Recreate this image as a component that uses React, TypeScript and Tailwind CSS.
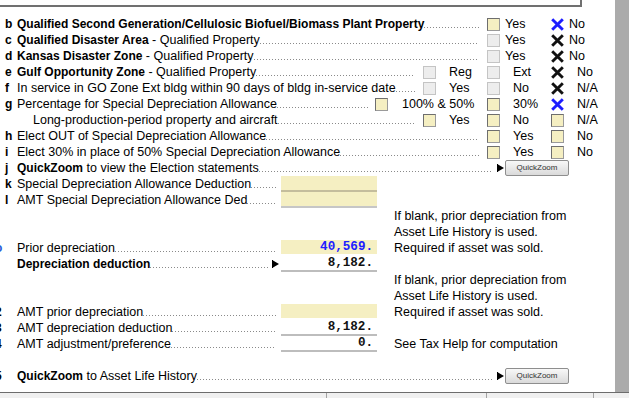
import React from "react";

const mono = "font-['Liberation_Mono','Courier_New',monospace]";

type Mark = "y" | "g" | "xk" | "xb";

function Check({ m }: { m: Mark }) {
  if (m === "xk" || m === "xb") {
    const c = m === "xb" ? "#1c1cff" : "#111111";
    return (
      <svg width="13" height="13" viewBox="0 0 13 13" className="shrink-0">
        <path d="M1.2 1.2 L11.8 11.8 M11.8 1.2 L1.2 11.8" stroke={c} strokeWidth="2.9" />
      </svg>
    );
  }
  return (
    <span
      className={
        m === "y"
          ? "block w-[13px] h-[13px] shrink-0 border border-[#9a9a9a] border-t-[#6e6e6e] border-l-[#6e6e6e] bg-[#f5efc2]"
          : "block w-[13px] h-[13px] shrink-0 border border-[#c4c4c4] bg-[#ededed]"
      }
    />
  );
}

function Leader() {
  return (
    <span className="flex-1 min-w-0 h-px self-end mb-[4px] bg-[linear-gradient(to_right,#8a8a8a_1px,transparent_1px)] bg-[length:3px_1px]" />
  );
}

function Arrow() {
  return (
    <svg width="7" height="8" viewBox="0 0 7 8" className="shrink-0">
      <rect x="0" y="0" width="1" height="8" fill="#000" />
      <path d="M1 0.5 L7 4 L1 7.5 Z" fill="#000" />
    </svg>
  );
}

function ZoomButton() {
  return (
    <button className="w-[64px] h-[16px] shrink-0 rounded-[2px] border border-[#8e8e8e] bg-[linear-gradient(#f8f8f8,#dadada)] text-[8px] leading-[14px] text-[#333]">
      QuickZoom
    </button>
  );
}

function Row({
  letter,
  cut,
  cutBlue,
  pr = "pr-[8px]",
  children,
  trail,
}: {
  letter?: string;
  cut?: string;
  cutBlue?: boolean;
  pr?: string;
  children?: React.ReactNode;
  trail?: React.ReactNode;
}) {
  return (
    <div className="flex h-4 items-center">
      <div className="w-[17px] shrink-0 overflow-hidden text-[12px] font-bold">
        {letter && <span className="pl-[5px]">{letter}</span>}
        {cut && <span className={cutBlue ? "block -ml-[5px] text-[#2a5bd7]" : "block -ml-[5px]"}>{cut}</span>}
      </div>
      <div className={`flex flex-1 min-w-0 items-center ${pr}`}>
        <span className="whitespace-nowrap">{children}</span>
        <Leader />
      </div>
      {trail && <div className="flex shrink-0 items-center">{trail}</div>}
    </div>
  );
}

function B({ children }: { children: React.ReactNode }) {
  return <b className="text-[12px] font-bold">{children}</b>;
}

function Opt({ m, label, cls }: { m: Mark; label: string; cls: string }) {
  return (
    <>
      <Check m={m} />
      <span className={cls}>{label}</span>
    </>
  );
}

function Field({ value, bg, line, blue }: { value?: string; bg?: string; line?: string; blue?: boolean }) {
  return (
    <div className="w-[96px] h-[16px] shrink-0 flex flex-col">
      <div
        className={`h-[14px] pr-[4px] text-right text-[12.6px] leading-[14px] font-bold ${mono} ${bg ?? ""} ${
          blue ? "text-[#2020ff]" : "text-[#111]"
        }`}
      >
        {value}
      </div>
      <div className={`h-[2px] ${line ?? ""}`} />
    </div>
  );
}

function Note({ children }: { children?: React.ReactNode }) {
  return <span className="w-[238px] shrink-0 pl-[17px] whitespace-nowrap">{children}</span>;
}

function NoteRow({ children }: { children: React.ReactNode }) {
  return <div className="h-4 pl-[394px] whitespace-nowrap">{children}</div>;
}

export default function App() {
  const yes2 = "w-[51px] pl-[5px]";
  const col = "w-[51px] pl-[13px]";
  return (
    <div className="w-[629px] h-[398px] overflow-hidden bg-white text-black font-['Liberation_Sans',Arial,sans-serif] text-[12.5px] leading-4">
      <div className="flex h-[392px]">
        <div className="w-[615px] shrink-0">
          <div className="h-[16px]">
            <div className="w-[582px] h-[7px] border-b-2 border-r-2 border-[#707070]" />
          </div>

          <Row
            letter="b"
            trail={
              <>
                <Opt m="y" label="Yes" cls={yes2} />
                <Opt m="xb" label="No" cls={yes2} />
              </>
            }
          >
            <B>Qualified Second Generation/Cellulosic Biofuel/Biomass Plant Property</B>
          </Row>
          <Row
            letter="c"
            trail={
              <>
                <Opt m="g" label="Yes" cls={yes2} />
                <Opt m="xk" label="No" cls={yes2} />
              </>
            }
          >
            <B>Qualified Disaster Area</B> - Qualified Property
          </Row>
          <Row
            letter="d"
            trail={
              <>
                <Opt m="g" label="Yes" cls={yes2} />
                <Opt m="xk" label="No" cls={yes2} />
              </>
            }
          >
            <B>Kansas Disaster Zone</B> - Qualified Property
          </Row>
          <Row
            letter="e"
            trail={
              <>
                <Opt m="g" label="Reg" cls={col} />
                <Opt m="g" label="Ext" cls={col} />
                <Opt m="xk" label="No" cls={col} />
              </>
            }
          >
            <B>Gulf Opportunity Zone</B> - Qualified Property
          </Row>
          <Row
            letter="f"
            trail={
              <>
                <Opt m="g" label="Yes" cls={col} />
                <Opt m="g" label="No" cls={col} />
                <Opt m="xk" label="N/A" cls={col} />
              </>
            }
          >
            In service in GO Zone Ext bldg within 90 days of bldg in-service date
          </Row>
          <Row
            letter="g"
            pr="pr-[7px]"
            trail={
              <>
                <Opt m="y" label="100% & 50%" cls="w-[99px] pl-[14px]" />
                <Opt m="y" label="30%" cls={col} />
                <Opt m="xb" label="N/A" cls={col} />
              </>
            }
          >
            Percentage for Special Depreciation Allowance
          </Row>
          <Row
            trail={
              <>
                <Opt m="y" label="Yes" cls={col} />
                <Opt m="y" label="No" cls={col} />
                <Opt m="y" label="N/A" cls={col} />
              </>
            }
          >
            <span className="pl-[16px]">Long-production-period property and aircraft</span>
          </Row>
          <Row
            letter="h"
            trail={
              <>
                <Opt m="y" label="Yes" cls={col} />
                <Opt m="y" label="No" cls={col} />
              </>
            }
          >
            Elect OUT of Special Depreciation Allowance
          </Row>
          <Row
            letter="i"
            trail={
              <>
                <Opt m="y" label="Yes" cls={col} />
                <Opt m="y" label="No" cls={col} />
              </>
            }
          >
            Elect 30% in place of 50% Special Depreciation Allowance
          </Row>
          <Row
            letter="j"
            pr="pr-[5px]"
            trail={
              <>
                <Arrow />
                <span className="w-px" />
                <ZoomButton />
                <span className="w-[46px]" />
              </>
            }
          >
            <B>QuickZoom</B> to view the Election statements
          </Row>
          <Row
            letter="k"
            pr="pr-[5px]"
            trail={
              <>
                <Field bg="bg-[#f5efc2]" line="bg-[#c4bd9c]" />
                <Note />
              </>
            }
          >
            Special Depreciation Allowance Deduction
          </Row>
          <Row
            letter="l"
            pr="pr-[5px]"
            trail={
              <>
                <Field bg="bg-[#f5efc2]" line="bg-[#c6c6c6]" />
                <Note />
              </>
            }
          >
            AMT Special Depreciation Allowance Ded
          </Row>

          <NoteRow>If blank, prior depreciation from</NoteRow>
          <NoteRow>Asset Life History is used.</NoteRow>
          <Row
            cut="o"
            cutBlue
            pr="pr-[5px]"
            trail={
              <>
                <Field value="40,569." bg="bg-[#f5efc2]" blue />
                <Note>Required if asset was sold.</Note>
              </>
            }
          >
            Prior depreciation
          </Row>
          <Row
            pr="pr-[4px]"
            trail={
              <>
                <Arrow />
                <span className="w-[2px]" />
                <Field value="8,182." line="bg-[#bdbdbd]" />
                <Note />
              </>
            }
          >
            <B>Depreciation deduction</B>
          </Row>
          <NoteRow>If blank, prior depreciation from</NoteRow>
          <NoteRow>Asset Life History is used.</NoteRow>
          <Row
            cut="2"
            pr="pr-[5px]"
            trail={
              <>
                <Field bg="bg-[#f5efc2]" />
                <Note>Required if asset was sold.</Note>
              </>
            }
          >
            AMT prior depreciation
          </Row>
          <Row
            cut="3"
            pr="pr-[5px]"
            trail={
              <>
                <Field value="8,182." line="bg-[#bdbdbd]" />
                <Note />
              </>
            }
          >
            AMT depreciation deduction
          </Row>
          <Row
            cut="4"
            pr="pr-[5px]"
            trail={
              <>
                <Field value="0." line="bg-[#bdbdbd]" />
                <Note>See Tax Help for computation</Note>
              </>
            }
          >
            AMT adjustment/preference
          </Row>
          <div className="h-4" />
          <Row
            cut="5"
            pr="pr-[5px]"
            trail={
              <>
                <Arrow />
                <span className="w-px" />
                <ZoomButton />
                <span className="w-[46px]" />
              </>
            }
          >
            <B>QuickZoom</B> to Asset Life History
          </Row>
        </div>
        <div className="flex-1 bg-[#ababab]" />
      </div>
      <div className="flex h-[6px] border-t border-[#6d6d6d] bg-[#f0f0f0]">
        <div className="w-[327px] border-r border-[#a3a3a3]" />
        <div className="w-[160px] border-r border-[#a3a3a3]" />
        <div className="w-[107px] border-r border-[#a3a3a3]" />
        <div className="flex-1" />
      </div>
    </div>
  );
}
